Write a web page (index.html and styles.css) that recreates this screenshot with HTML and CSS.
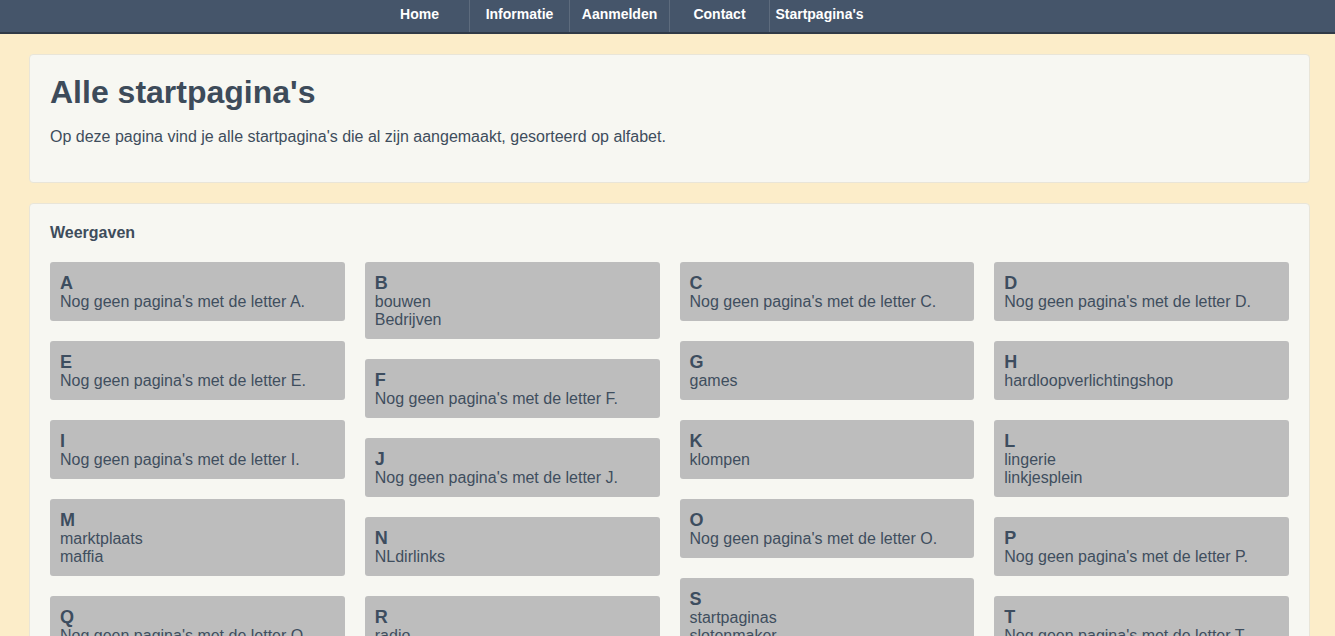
FILE: index.html
```html
<!DOCTYPE html>
<html lang="nl">
<head>
<meta charset="utf-8">
<title>Alle startpagina's</title>
<link rel="stylesheet" href="styles.css">
</head>
<body>
<nav class="topnav">
  <ul class="menu">
    <li><a href="#">Home</a></li>
    <li><a href="#">Informatie</a></li>
    <li><a href="#">Aanmelden</a></li>
    <li><a href="#">Contact</a></li>
    <li><a href="#">Startpagina's</a></li>
  </ul>
</nav>
<main class="page">
  <section class="card intro">
    <h1>Alle startpagina's</h1>
    <p>Op deze pagina vind je alle startpagina's die al zijn aangemaakt, gesorteerd op alfabet.</p>
  </section>
  <section class="card list">
    <h2>Weergaven</h2>
    <div class="columns">
      <div class="col">
        <div class="item"><div class="letter">A</div><div>Nog geen pagina's met de letter A.</div></div>
        <div class="item"><div class="letter">E</div><div>Nog geen pagina's met de letter E.</div></div>
        <div class="item"><div class="letter">I</div><div>Nog geen pagina's met de letter I.</div></div>
        <div class="item"><div class="letter">M</div><div>marktplaats</div><div>maffia</div></div>
        <div class="item"><div class="letter">Q</div><div>Nog geen pagina's met de letter Q.</div></div>
      </div>
      <div class="col">
        <div class="item"><div class="letter">B</div><div>bouwen</div><div>Bedrijven</div></div>
        <div class="item"><div class="letter">F</div><div>Nog geen pagina's met de letter F.</div></div>
        <div class="item"><div class="letter">J</div><div>Nog geen pagina's met de letter J.</div></div>
        <div class="item"><div class="letter">N</div><div>NLdirlinks</div></div>
        <div class="item"><div class="letter">R</div><div>radio</div></div>
      </div>
      <div class="col">
        <div class="item"><div class="letter">C</div><div>Nog geen pagina's met de letter C.</div></div>
        <div class="item"><div class="letter">G</div><div>games</div></div>
        <div class="item"><div class="letter">K</div><div>klompen</div></div>
        <div class="item"><div class="letter">O</div><div>Nog geen pagina's met de letter O.</div></div>
        <div class="item"><div class="letter">S</div><div>startpaginas</div><div>slotenmaker</div></div>
      </div>
      <div class="col">
        <div class="item"><div class="letter">D</div><div>Nog geen pagina's met de letter D.</div></div>
        <div class="item"><div class="letter">H</div><div>hardloopverlichtingshop</div></div>
        <div class="item"><div class="letter">L</div><div>lingerie</div><div>linkjesplein</div></div>
        <div class="item"><div class="letter">P</div><div>Nog geen pagina's met de letter P.</div></div>
        <div class="item"><div class="letter">T</div><div>Nog geen pagina's met de letter T.</div></div>
      </div>
    </div>
  </section>
</main>
</body>
</html>
```
FILE: styles.css
```css
html, body {
  margin: 0;
  padding: 0;
}
body {
  background: #fcedc9;
  font-family: "Liberation Sans", Arial, sans-serif;
  color: #3e4d5c;
}
.topnav {
  background: #45556a;
  height: 32px;
  border-bottom: 2px solid #303a47;
}
.menu {
  list-style: none;
  margin: 0;
  padding: 0 0 0 369px;
  display: flex;
  height: 32px;
}
.menu li {
  box-sizing: border-box;
  width: 100px;
  border-left: 1px solid #5d6b7d;
  display: flex;
  align-items: center;
  justify-content: center;
}
.menu li:first-child {
  border-left: 1px solid transparent;
}
.menu a {
  color: #ffffff;
  font-weight: bold;
  font-size: 14px;
  text-decoration: none;
  position: relative;
  top: -2px;
}
.page {
  padding: 20px 25px 20px 29px;
  display: flex;
  flex-direction: column;
  gap: 20px;
}
.card {
  background: #f7f7f2;
  border: 1px solid #e9e5d8;
  border-radius: 4px;
  padding: 19px 20px 20px 20px;
}
.intro h1 {
  margin: 0;
  font-size: 32px;
  line-height: 37px;
  color: #3d4b5a;
}
.intro p {
  margin: 16px 0 15px 0;
  font-size: 16px;
  line-height: 20px;
}
.list h2 {
  margin: 0 0 20px 0;
  font-size: 16px;
  line-height: 18px;
  padding-top: 1px;
}
.columns {
  display: grid;
  grid-template-columns: repeat(4, 1fr);
  column-gap: 20px;
  align-items: start;
}
.col {
  display: flex;
  flex-direction: column;
  gap: 20px;
}
.item {
  background: #bdbdbd;
  border-radius: 3px;
  padding: 11px 10px 10px 10px;
  font-size: 16px;
  line-height: 18px;
  color: #3f4e5e;
}
.letter {
  font-weight: bold;
  font-size: 18px;
  line-height: 20px;
  color: #3d4d5f;
}
```
